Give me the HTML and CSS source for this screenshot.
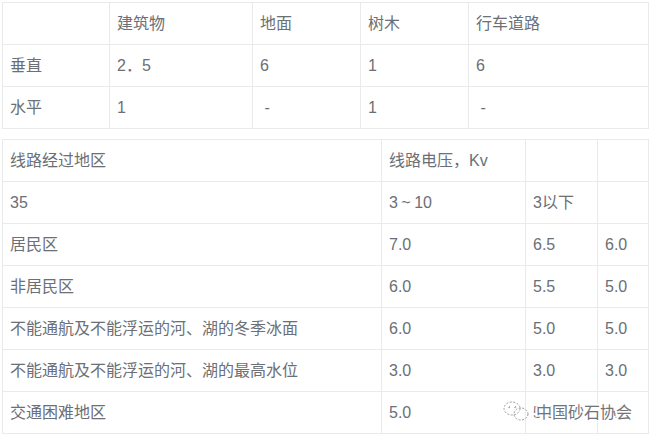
FILE: index.html
```html
<!DOCTYPE html>
<html lang="zh">
<head>
<meta charset="utf-8">
<title>线路距离</title>
<link rel="stylesheet" href="styles.css">
</head>
<body>
<main class="page">
<table class="grid first">
<colgroup><col class="a1"><col class="a2"><col class="a3"><col class="a4"><col class="a5"></colgroup>
<tr><td></td><td>建筑物</td><td>地面</td><td>树木</td><td>行车道路</td></tr>
<tr><td>垂直</td><td>2．5</td><td>6</td><td>1</td><td>6</td></tr>
<tr><td>水平</td><td>1</td><td>&nbsp;-</td><td>1</td><td>&nbsp;-</td></tr>
</table>
<table class="grid second">
<colgroup><col class="b1"><col class="b2"><col class="b3"><col class="b4"></colgroup>
<tr><td>线路经过地区</td><td>线路电压，Kv</td><td></td><td></td></tr>
<tr><td>35</td><td class="range">3 ~ 10</td><td>3以下</td><td></td></tr>
<tr><td>居民区</td><td>7.0</td><td>6.5</td><td>6.0</td></tr>
<tr><td>非居民区</td><td>6.0</td><td>5.5</td><td>5.0</td></tr>
<tr><td>不能通航及不能浮运的河、湖的冬季冰面</td><td>6.0</td><td>5.0</td><td>5.0</td></tr>
<tr><td>不能通航及不能浮运的河、湖的最高水位</td><td>3.0</td><td>3.0</td><td>3.0</td></tr>
<tr><td>交通困难地区</td><td>5.0</td><td>5.0</td><td>4.0</td></tr>
</table>
<div class="mark">
<svg class="mark-icon" width="26" height="20" viewBox="0 0 26 20" fill="none" stroke="#9a9a9a" stroke-width="1" stroke-dasharray="2 1.5"><ellipse cx="9" cy="7.5" rx="8" ry="6.5"/><ellipse cx="18" cy="13" rx="7" ry="6"/><circle cx="6" cy="6" r=".8"/><circle cx="12" cy="6" r=".8"/></svg>
<span class="mark-text">中国砂石协会</span>
</div>
</main>
</body>
</html>
```
FILE: styles.css
```css
html, body { margin: 0; padding: 0; background: #fff; }
body { width: 652px; height: 438px; overflow: hidden; font-family: "Liberation Sans", "Noto Sans CJK SC", sans-serif; font-size: 16px; color: #6b6f76; }
.page { position: relative; padding: 2px 3px 0 2px; display: flex; flex-direction: column; gap: 10px; }
.grid { width: 646px; table-layout: fixed; border-collapse: collapse; }
.grid td { height: 42px; padding: 0 7px; border: 1px solid #e8ebea; box-sizing: border-box; white-space: nowrap; vertical-align: middle; line-height: 24px; }
.grid .range { word-spacing: -1px; }
.a1 { width: 107px; } .a2 { width: 143px; } .a3 { width: 108px; } .a4 { width: 108px; } .a5 { width: 180px; }
.b1 { width: 379px; } .b2 { width: 144px; } .b3 { width: 72px; } .b4 { width: 51px; }
.mark { position: absolute; left: 503px; top: 399px; display: flex; align-items: center; gap: 7px; }
.mark-text { color: #707377; text-shadow: 1px 0 0 #fff, -1px 0 0 #fff, 0 1px 0 #fff, 0 -1px 0 #fff, 2px 2px 0 #fff, -2px -2px 0 #fff, 2px -2px 0 #fff, -2px 2px 0 #fff; }
```
